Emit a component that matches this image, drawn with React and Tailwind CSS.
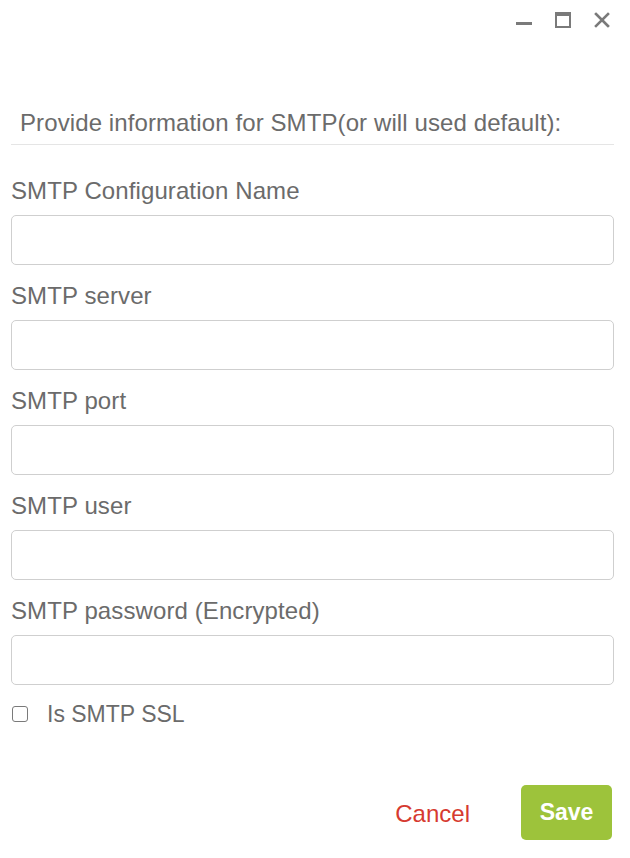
import React, { useState } from 'react';

const fields = [
  'SMTP Configuration Name',
  'SMTP server',
  'SMTP port',
  'SMTP user',
  'SMTP password (Encrypted)',
];

const App = () => {
  const [values, setValues] = useState({});
  const [ssl, setSsl] = useState(false);

  return (
    <div className="w-[630px] h-[858px] bg-white text-[#6b6b6b]" style={{ fontFamily: '"Liberation Sans", Arial, sans-serif' }}>
      {/* window controls */}
      <div className="h-10 flex items-center justify-end gap-[23px] pr-[20px]">
        <svg width="16" height="16" viewBox="0 0 16 16">
          <rect x="0" y="10" width="16" height="3" fill="#7a7a7a" />
        </svg>
        <svg width="16" height="16" viewBox="0 0 16 16">
          <rect x="1" y="1" width="14" height="14" fill="none" stroke="#7a7a7a" strokeWidth="2" />
          <rect x="1" y="1" width="14" height="3" fill="#7a7a7a" />
        </svg>
        <svg width="16" height="16" viewBox="0 0 16 16">
          <path d="M2 2L14 14M14 2L2 14" stroke="#7a7a7a" strokeWidth="2.6" strokeLinecap="square" />
        </svg>
      </div>

      <div className="px-[11px] pr-[16px]">
        <div className="mt-[71px] pl-[9px] pb-[9px] border-b border-[#e5e5e5] text-[24px] leading-6 tracking-[0.1px]">
          Provide information for SMTP(or will used default):
        </div>

        <div className="mt-[34px] flex flex-col gap-[19px]">
          {fields.map((f) => (
            <div key={f} className="flex flex-col gap-3">
              <label className="text-[24px] leading-6 tracking-[0.1px]">{f}</label>
              <input
                type={f.includes('password') ? 'password' : 'text'}
                value={values[f] || ''}
                onChange={(e) => setValues({ ...values, [f]: e.target.value })}
                className="h-[50px] w-full border border-[#cfcfcf] rounded-[5px] px-3 text-[18px] outline-none"
              />
            </div>
          ))}
        </div>

        <label className="mt-[17px] flex items-center gap-[19px] text-[23px] leading-6">
          <input
            type="checkbox"
            checked={ssl}
            onChange={() => setSsl(!ssl)}
            className="appearance-none w-[16px] h-[16px] ml-[1px] border-[1.5px] border-[#7a7a7a] rounded-[3px] checked:bg-[#7a7a7a]"
          />
          Is SMTP SSL
        </label>

        <div className="mt-[59px] flex items-center justify-end gap-[51px] pr-[2px]">
          <button className="text-[#d63a30] text-[24px] pt-[2px]">Cancel</button>
          <button className="w-[91px] h-[55px] rounded-[5px] bg-[#9dc33b] text-white text-[23px] font-bold">
            Save
          </button>
        </div>
      </div>
    </div>
  );
};

export default App;
